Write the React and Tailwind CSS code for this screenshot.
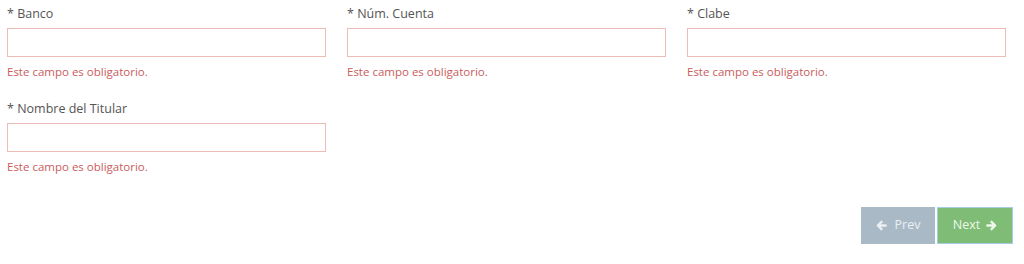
const FIELDS_TOP = ['Banco', 'Núm. Cuenta', 'Clabe'];

function Arrow({ dir }) {
  // chunky arrow like the old font-awesome glyph
  return (
    <svg width="11" height="11" viewBox="0 0 12 12" className={dir === 'left' ? 'rotate-180' : ''}>
      <path
        d="M1.5 6h8M6 2l4 4-4 4"
        fill="none"
        stroke="currentColor"
        strokeWidth="2.6"
        strokeLinecap="round"
        strokeLinejoin="round"
      />
    </svg>
  );
}

function Field({ label }) {
  return (
    <div className="flex flex-col">
      <label className="pt-[5px] text-[12.5px] leading-[18px] text-[#555555]">* {label}</label>
      <input
        type="text"
        className="mt-[5px] h-[29px] w-full border border-[#eebcb6] bg-white px-2 text-[12px] outline-none"
      />
      <span className="mt-[7px] text-[11.5px] leading-[16px] text-[#c95c5c]">Este campo es obligatorio.</span>
    </div>
  );
}

export default function App() {
  return (
    <div
      className="h-[264px] w-[1024px] bg-white"
      style={{ fontFamily: '"Open Sans", "Liberation Sans", sans-serif' }}
    >
      <div className="grid grid-cols-[319px_319px_319px] gap-x-[21px] pl-[7px]">
        {FIELDS_TOP.map((f) => (
          <Field key={f} label={f} />
        ))}
      </div>
      <div className="mt-[15px] grid grid-cols-[319px_319px_319px] gap-x-[21px] pl-[7px]">
        <Field label="Nombre del Titular" />
      </div>
      <div className="mt-[32px] flex justify-end gap-[2px] pr-[11px]">
        <button className="flex h-[37px] w-[74px] items-center justify-center gap-[8px] bg-[#a9bac6] text-[12.5px] text-[#eaeff3]">
          <Arrow dir="left" />
          Prev
        </button>
        <button className="flex h-[37px] w-[76px] items-center justify-center gap-[6px] border border-[#a6cde3] bg-[#7fbd77] text-[12.5px] text-[#eef7ea]">
          Next
          <Arrow dir="right" />
        </button>
      </div>
    </div>
  );
}
